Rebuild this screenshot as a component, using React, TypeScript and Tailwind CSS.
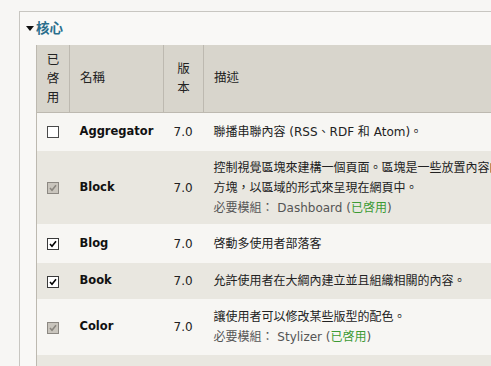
type Mod = {
  name: string
  version: string
  desc: string[]
  requires?: string
  state: 'off' | 'on' | 'locked'
  h: string
}

const modules: Mod[] = [
  { name: 'Aggregator', version: '7.0', desc: ['聯播串聯內容 (RSS、RDF 和 Atom)。'], state: 'off', h: 'h-[39px]' },
  {
    name: 'Block',
    version: '7.0',
    desc: ['控制視覺區塊來建構一個頁面。區塊是一些放置內容的', '方塊，以區域的形式來呈現在網頁中。'],
    requires: 'Dashboard',
    state: 'locked',
    h: 'h-[73px]',
  },
  { name: 'Blog', version: '7.0', desc: ['啓動多使用者部落客'], state: 'on', h: 'h-[39px]' },
  { name: 'Book', version: '7.0', desc: ['允許使用者在大綱內建立並且組織相關的內容。'], state: 'on', h: 'h-[36px]' },
  {
    name: 'Color',
    version: '7.0',
    desc: ['讓使用者可以修改某些版型的配色。'],
    requires: 'Stylizer',
    state: 'locked',
    h: 'h-[56px]',
  },
]

function Check({ state }: { state: Mod['state'] }) {
  if (state === 'off') {
    return <span className="inline-block w-[12px] h-[12px] border border-[#4a4a4a] bg-white align-middle" />
  }
  const locked = state === 'locked'
  return (
    <span
      className={
        locked
          ? 'inline-flex w-[12px] h-[12px] border border-[#8c8882] bg-[#c9c5bd] items-center justify-center align-middle'
          : 'inline-flex w-[12px] h-[12px] border border-[#3a3a3a] bg-white items-center justify-center align-middle'
      }
    >
      <svg width="8" height="8" viewBox="0 0 8 8">
        <path d="M1 4 L3 6.2 L7 1.2" fill="none" stroke={locked ? '#8a867f' : '#000'} strokeWidth="1.6" />
      </svg>
    </span>
  )
}

export default function App() {
  return (
    <div
      className="w-[491px] h-[366px] overflow-hidden bg-[#f7f6f4] text-[12px] text-[#222]"
      style={{ fontFamily: '"DejaVu Sans", "Noto Sans CJK TC", sans-serif' }}
    >
      <div className="ml-[19px] mt-[11px] border-l border-t border-[#c8c6c1] bg-[#f9f8f6] pt-[9px] h-[400px]">
        <div className="flex items-center gap-[2px] pl-[6px] h-[16px]">
          <svg width="8" height="6" viewBox="0 0 8 6">
            <polygon points="0,0 8,0 4,5" fill="#111" />
          </svg>
          <span className="text-[13.5px] font-bold text-[#2a6e8c] leading-none">核心</span>
        </div>
        <table className="ml-[16px] mt-[8px] w-[600px] border-collapse border-l border-[#bdb9b0] table-fixed">
          <colgroup>
            <col className="w-[33px]" />
            <col className="w-[94px]" />
            <col className="w-[40px]" />
            <col />
          </colgroup>
          <thead>
            <tr className="bg-[#d8d5cc] h-[67px] border-b border-[#bdb9b0] text-[12.5px]">
              <th className="font-normal border-r border-[#bdb9b0] leading-[19px] text-center">
                已<br />啓<br />用
              </th>
              <th className="font-normal border-r border-[#bdb9b0] text-left pl-[10px]">名稱</th>
              <th className="font-normal border-r border-[#bdb9b0] leading-[19px] text-center">
                版<br />本
              </th>
              <th className="font-normal text-left pl-[10px]">描述</th>
            </tr>
          </thead>
          <tbody>
            {modules.map((m, i) => (
              <tr key={m.name} className={`${m.h} ${i % 2 === 1 ? 'bg-[#e9e7e0]' : 'bg-[#f7f6f3]'}`}>
                <td className="text-center align-middle">
                  <Check state={m.state} />
                </td>
                <td className="pl-[10px] font-bold text-[11.5px] text-[#111]">{m.name}</td>
                <td className="pl-[10px]">{m.version}</td>
                <td className="pl-[10px] leading-[20px] whitespace-nowrap">
                  {m.desc.map((d) => (
                    <div key={d}>{d}</div>
                  ))}
                  {m.requires && (
                    <div className="text-[#555]">
                      必要模組： {m.requires} (<span className="text-[#3c9a34]">已啓用</span>)
                    </div>
                  )}
                </td>
              </tr>
            ))}
            <tr className="h-[44px] bg-[#e9e7e0]">
              <td />
              <td />
              <td />
              <td />
            </tr>
          </tbody>
        </table>
      </div>
    </div>
  )
}
